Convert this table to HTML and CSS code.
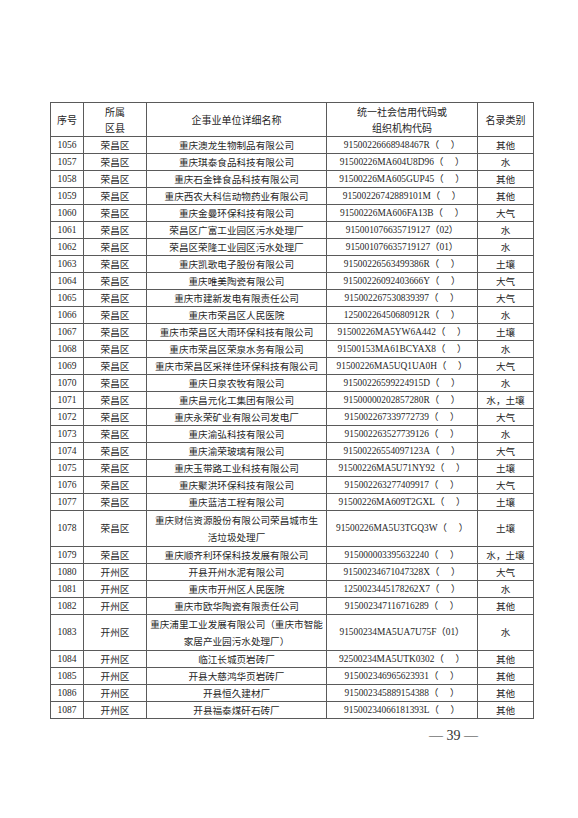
FILE: index.html
```html
<!DOCTYPE html>
<html lang="zh-CN">
<head>
<meta charset="utf-8">
<title>名录</title>
<link rel="stylesheet" href="styles.css">
</head>
<body>
<div class="page">
<table class="list">
<colgroup>
<col class="c-no"><col class="c-area"><col class="c-name"><col class="c-code"><col class="c-type">
</colgroup>
<thead>
<tr class="head"><th>序号</th><th>所属<br>区县</th><th>企事业单位详细名称</th><th>统一社会信用代码或<br>组织机构代码</th><th>名录类别</th></tr>
</thead>
<tbody>
<tr><td class="num">1056</td><td>荣昌区</td><td>重庆澳龙生物制品有限公司</td><td class="code">91500226668948467R（　&nbsp;）</td><td>其他</td></tr>
<tr><td class="num">1057</td><td>荣昌区</td><td>重庆琪泰食品科技有限公司</td><td class="code">91500226MA604U8D96（　&nbsp;）</td><td>水</td></tr>
<tr><td class="num">1058</td><td>荣昌区</td><td>重庆石金锋食品科技有限公司</td><td class="code">91500226MA605GUP45（　&nbsp;）</td><td>其他</td></tr>
<tr><td class="num">1059</td><td>荣昌区</td><td>重庆西农大科信动物药业有限公司</td><td class="code">91500226742889101M（　&nbsp;）</td><td>其他</td></tr>
<tr><td class="num">1060</td><td>荣昌区</td><td>重庆金曼环保科技有限公司</td><td class="code">91500226MA606FA13B（　&nbsp;）</td><td>大气</td></tr>
<tr><td class="num">1061</td><td>荣昌区</td><td>荣昌区广富工业园区污水处理厂</td><td class="code">915001076635719127（02）</td><td>水</td></tr>
<tr><td class="num">1062</td><td>荣昌区</td><td>荣昌区荣隆工业园区污水处理厂</td><td class="code">915001076635719127（01）</td><td>水</td></tr>
<tr><td class="num">1063</td><td>荣昌区</td><td>重庆凯歌电子股份有限公司</td><td class="code">91500226563499386R（　&nbsp;）</td><td>土壤</td></tr>
<tr><td class="num">1064</td><td>荣昌区</td><td>重庆唯美陶瓷有限公司</td><td class="code">91500226092403666Y（　&nbsp;）</td><td>大气</td></tr>
<tr><td class="num">1065</td><td>荣昌区</td><td>重庆市建新发电有限责任公司</td><td class="code">915002267530839397（　&nbsp;）</td><td>大气</td></tr>
<tr><td class="num">1066</td><td>荣昌区</td><td>重庆市荣昌区人民医院</td><td class="code">12500226450680912R（　&nbsp;）</td><td>水</td></tr>
<tr><td class="num">1067</td><td>荣昌区</td><td>重庆市荣昌区大雨环保科技有限公司</td><td class="code">91500226MA5YW6A442（　&nbsp;）</td><td>土壤</td></tr>
<tr><td class="num">1068</td><td>荣昌区</td><td>重庆市荣昌区荣泉水务有限公司</td><td class="code">91500153MA61BCYAX8（　&nbsp;）</td><td>水</td></tr>
<tr><td class="num">1069</td><td>荣昌区</td><td>重庆市荣昌区采祥佳环保科技有限公司</td><td class="code">91500226MA5UQ1UA0H（　&nbsp;）</td><td>大气</td></tr>
<tr><td class="num">1070</td><td>荣昌区</td><td>重庆日泉农牧有限公司</td><td class="code">91500226599224915D（　&nbsp;）</td><td>水</td></tr>
<tr><td class="num">1071</td><td>荣昌区</td><td>重庆昌元化工集团有限公司</td><td class="code">91500000202857280R（　&nbsp;）</td><td>水，土壤</td></tr>
<tr><td class="num">1072</td><td>荣昌区</td><td>重庆永荣矿业有限公司发电厂</td><td class="code">915002267339772739（　&nbsp;）</td><td>大气</td></tr>
<tr><td class="num">1073</td><td>荣昌区</td><td>重庆渝弘科技有限公司</td><td class="code">915002263527739126（　&nbsp;）</td><td>水</td></tr>
<tr><td class="num">1074</td><td>荣昌区</td><td>重庆渝荣玻璃有限公司</td><td class="code">91500226554097123A（　&nbsp;）</td><td>大气</td></tr>
<tr><td class="num">1075</td><td>荣昌区</td><td>重庆玉带路工业科技有限公司</td><td class="code">91500226MA5U71NY92（　&nbsp;）</td><td>土壤</td></tr>
<tr><td class="num">1076</td><td>荣昌区</td><td>重庆聚洪环保科技有限公司</td><td class="code">915002263277409917（　&nbsp;）</td><td>大气</td></tr>
<tr><td class="num">1077</td><td>荣昌区</td><td>重庆蓝洁工程有限公司</td><td class="code">91500226MA609T2GXL（　&nbsp;）</td><td>土壤</td></tr>
<tr class="tall"><td class="num">1078</td><td>荣昌区</td><td>重庆财信资源股份有限公司荣昌城市生<br>活垃圾处理厂</td><td class="code">91500226MA5U3TGQ3W（　&nbsp;）</td><td>土壤</td></tr>
<tr><td class="num">1079</td><td>荣昌区</td><td>重庆顺齐利环保科技发展有限公司</td><td class="code">915000003395632240（　&nbsp;）</td><td>水，土壤</td></tr>
<tr><td class="num">1080</td><td>开州区</td><td>开县开州水泥有限公司</td><td class="code">91500234671047328X（　&nbsp;）</td><td>大气</td></tr>
<tr><td class="num">1081</td><td>开州区</td><td>重庆市开州区人民医院</td><td class="code">1250023445178262X7（　&nbsp;）</td><td>水</td></tr>
<tr><td class="num">1082</td><td>开州区</td><td>重庆市欧华陶瓷有限责任公司</td><td class="code">915002347116716289（　&nbsp;）</td><td>其他</td></tr>
<tr class="tall"><td class="num">1083</td><td>开州区</td><td>重庆浦里工业发展有限公司（重庆市智能<br>家居产业园污水处理厂）</td><td class="code">91500234MA5UA7U75F（01）</td><td>水</td></tr>
<tr><td class="num">1084</td><td>开州区</td><td>临江长城页岩砖厂</td><td class="code">92500234MA5UTK0302（　&nbsp;）</td><td>其他</td></tr>
<tr><td class="num">1085</td><td>开州区</td><td>开县大慈鸿华页岩砖厂</td><td class="code">915002346965623931（　&nbsp;）</td><td>其他</td></tr>
<tr><td class="num">1086</td><td>开州区</td><td>开县恒久建材厂</td><td class="code">915002345889154388（　&nbsp;）</td><td>其他</td></tr>
<tr><td class="num">1087</td><td>开州区</td><td>开县福泰煤矸石砖厂</td><td class="code">91500234066181393L（　&nbsp;）</td><td>其他</td></tr>
</tbody>
</table>
<div class="pageno">— 39 —</div>
</div>
</body>
</html>
```
FILE: styles.css
```css
html, body {
  margin: 0;
  padding: 0;
  background: #ffffff;
}
.page {
  padding: 102px 0 0 50px;
  width: 483px;
}
.list {
  border-collapse: collapse;
  table-layout: fixed;
  width: 483px;
  font-family: "Noto Sans CJK SC", "Noto Sans", sans-serif;
  font-size: 9.6px;
  color: #262626;
}
.c-no { width: 33px; }
.c-area { width: 63px; }
.c-name { width: 180px; }
.c-code { width: 151px; }
.c-type { width: 56px; }
.list th,
.list td {
  border: 1px solid #5a5a5a;
  padding: 0;
  text-align: center;
  vertical-align: middle;
  font-weight: normal;
  line-height: 15px;
  height: 16px;
  white-space: nowrap;
}
.list .head th {
  height: 33px;
  line-height: 16px;
  font-size: 10px;
}
.list .tall td {
  height: 35px;
  line-height: 17px;
}
.list td.num {
  font-family: "Liberation Serif", serif;
  font-size: 9.5px;
}
.list td.code {
  font-family: "Liberation Serif", "Noto Sans CJK SC", serif;
  font-size: 9.4px;
}
.pageno {
  margin-top: 9px;
  padding-right: 55px;
  text-align: right;
  font-family: "Liberation Serif", serif;
  font-size: 14px;
  line-height: 16px;
  color: #333;
}
```
